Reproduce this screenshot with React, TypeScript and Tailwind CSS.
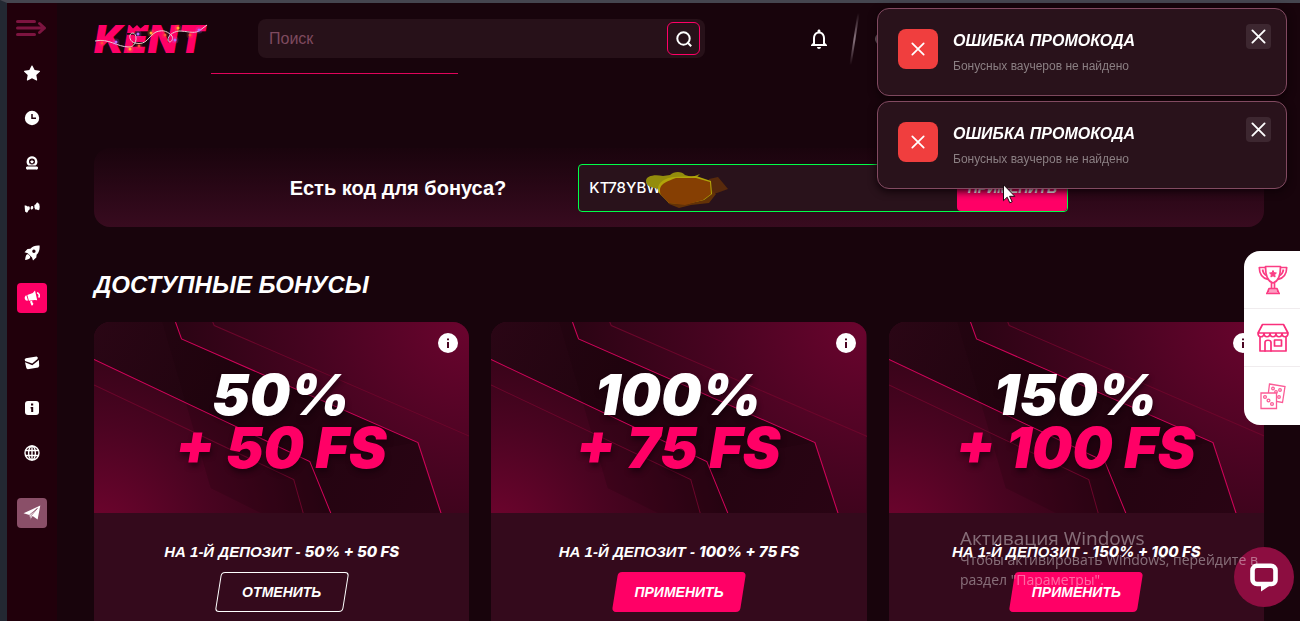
import React from 'react';
import { MdNotificationsNone } from 'react-icons/md';
import { BsStarFill } from 'react-icons/bs';

interface Bonus {
  percent: string;
  spins: string;
  applied: boolean;
}

const bonuses: Bonus[] = [
  { percent: '50%', spins: '50 FS', applied: true },
  { percent: '100%', spins: '75 FS', applied: false },
  { percent: '150%', spins: '100 FS', applied: false },
];

const ClockIcon = () => (
  <svg viewBox="0 0 16 16" className="h-4 w-4">
    <circle cx="8" cy="8" r="7.2" fill="#fff" />
    <path d="M8 4v4.2h4" fill="none" stroke="#21000b" strokeWidth="1.5" />
  </svg>
);

const WheelIcon = () => (
  <svg viewBox="0 0 16 16" className="h-4 w-4" fill="#fff">
    <path
      fillRule="evenodd"
      d="M8 1.2a5.4 5.4 0 0 1 3.6 9.4H4.4A5.4 5.4 0 0 1 8 1.2ZM8 3.6a3 3 0 1 0 0 6A3 3 0 0 0 8 3.6Z"
    />
    <path d="m8 4.600.7 1.300 1.500.2-1.100 1 .3 1.500L8 7.900l-1.400.7.3-1.500-1.100-1 1.500-.2Z" />
    <path d="M3 11.600h10a1.500 1.500 0 0 1-1 3H4a1.500 1.500 0 0 1-1-3Z" />
  </svg>
);

const CandyIcon = () => (
  <svg viewBox="0 0 16 16" className="h-4 w-4" fill="#fff">
    <path d="M.6 5.400 2 5.600l1.600.8 1.500-.1.8 1.500-.3 1.800-1.200.8-.6 1.400-1 1.100-.6-1-.9.2-.4-2.500Z" />
    <path d="m10.400 5 1.400-.8.8-1.400L14 2.600l.4 1 .8.200.5 3-.3 2.800-1.200.6-1.400-.7-1.500.1-.9-2Z" />
    <path d="M7.300 6.300c1-.5 2 .1 2 1.100s-.6 1.900-1.500 2c-1 0-1.300-.7-1.200-1.500.1-.7.3-1.300.7-1.600Z" />
  </svg>
);

const RocketIcon = () => (
  <svg viewBox="0 0 16 16" className="h-4 w-4" fill="#fff">
    <path
      fillRule="evenodd"
      d="M15.600.6c.3 4-.6 6.800-3 9.200l-.3 2.800-3.300 3-1-3.100-4.300-4.300-3.200-.9 3-3.300 2.900-.3C8.700 1.300 11.600.3 15.600.6ZM9.900 4.600a1.700 1.700 0 1 0 0 3.400 1.700 1.700 0 0 0 0-3.400Z"
    />
    <path d="M2.800 9.500c1-.5 2 .2 2.400 1 .9.300 1.400 1.300.9 2.300-.8 1.400-2.800 1.900-5 2.300.2-2.200.5-4.400 1.700-5.600Z" />
  </svg>
);

const MegaphoneIcon = () => (
  <svg viewBox="0 0 16 16" className="h-4 w-4" fill="#fff">
    <path d="M11 .5 13.200 10.300l-2.500-.4-5.800.8L3.300 5 8.800 2.900Z" />
    <path d="M2.400 5.300 4 10.600c-1.500.5-2.700-.2-3.200-1.800-.4-1.500.2-2.900 1.600-3.500Z" />
    <path d="m6 11.400 2-.6.7 2.300.7.300-.6 1.800-1.300.2Z" />
    <path d="M13 2.700c2 .4 3 3 1.600 4.800" fill="none" stroke="#fff" strokeWidth="1.600" />
  </svg>
);

const MailIcon = () => (
  <svg viewBox="0 0 16 16" className="h-4 w-4" fill="#fff">
    <path d="M.8 4.500 1.700 3.300 12.600 1.500l1.200 1-.2 1.600-5.400 4.500L1 5.900Z" />
    <path d="m1 7.300 7.300 3 6.600-5.400.3 6-1 1.500-10.500 1.800-1.300-1Z" />
  </svg>
);

const InfoSquareIcon = () => (
  <svg viewBox="0 0 16 16" className="h-4 w-4">
    <rect x="1" y="1" width="14" height="14" rx="3" fill="#fff" />
    <path d="M7 3.500h2.200v2H7ZM6.600 7h2.600v5H7.200V8.500h-.6Z" fill="#21000b" />
  </svg>
);

const GlobeIcon = () => (
  <svg viewBox="0 0 16 16" className="h-4 w-4" fill="none" stroke="#fff" strokeWidth="1.400">
    <circle cx="8" cy="8" r="7" />
    <ellipse cx="8" cy="8" rx="3.400" ry="7" />
    <path d="M8 1v14M1.500 5.500h13M1.500 10.500h13" />
  </svg>
);

const TelegramIcon = () => (
  <svg viewBox="0 0 18 18" className="h-[18px] w-[18px]" fill="#fff">
    <path d="M.5 9.300 17.300 1.600 14.600 15.400 9.600 12.100 7.400 15.400 6.500 10.900Z" />
    <path d="m6.500 10.900 7.900-6.500-6.300 7.300-.6 3.400" fill="none" stroke="#8a4f68" strokeWidth=".8" />
  </svg>
);

const navItems = [
  { label: 'Избранное', icon: <BsStarFill className="h-4 w-4" /> },
  { label: 'Недавние', icon: <ClockIcon /> },
  { label: 'Колесо', icon: <WheelIcon /> },
  { label: 'Слоты', icon: <CandyIcon /> },
  { label: 'Краш', icon: <RocketIcon /> },
  { label: 'Акции', icon: <MegaphoneIcon />, active: true },
];

const serviceItems = [
  { label: 'Почта', icon: <MailIcon /> },
  { label: 'Информация', icon: <InfoSquareIcon /> },
  { label: 'Язык', icon: <GlobeIcon /> },
];

const NavLink: React.FC<{ label: string; active?: boolean; children: React.ReactNode }> = ({
  label,
  active,
  children,
}) => (
  <a
    href="#"
    aria-label={label}
    className={`flex h-[30px] w-[30px] items-center justify-center rounded text-white ${active ? 'bg-[#ff0066]' : ''}`}
  >
    {children}
  </a>
);

const Sidebar = () => (
  <nav className="flex w-[50px] shrink-0 flex-col items-center bg-[#21000b] pt-4">
    <button type="button" aria-label="Меню">
      <svg width="32" height="20" viewBox="0 0 32 20" fill="none" stroke="#7d1440" strokeWidth="3" strokeLinecap="round" strokeLinejoin="round">
        <path d="M1.500 2.500h17M1.500 9h27M1.500 15.500h17M23.500 4.500l5 4.500-5 4.500" />
      </svg>
    </button>
    <div className="mt-[19px] flex flex-col gap-[15px]">
      {navItems.map((item) => (
        <NavLink key={item.label} label={item.label} active={item.active}>
          {item.icon}
        </NavLink>
      ))}
    </div>
    <div className="mt-[35px] flex flex-col gap-[15px]">
      {serviceItems.map((item) => (
        <NavLink key={item.label} label={item.label}>
          {item.icon}
        </NavLink>
      ))}
    </div>
    <a href="#" aria-label="Telegram" className="mt-[30px] flex h-[30px] w-[30px] items-center justify-center rounded bg-[#8a4f68]">
      <TelegramIcon />
    </a>
  </nav>
);

const bulbs = [
  { x: 8, y: 19, color: '#ff4a3a' },
  { x: 22, y: 18, color: '#b56bff' },
  { x: 36, y: 25, color: '#ffb52e' },
  { x: 44, y: 10, color: '#b56bff' },
  { x: 45, y: 22, color: '#ff4a3a' },
  { x: 57, y: 9, color: '#ffb52e' },
  { x: 71, y: 11, color: '#ff5a3a' },
  { x: 81, y: 16, color: '#b56bff' },
  { x: 84, y: 4, color: '#ffb52e' },
  { x: 96, y: 11, color: '#ff5a3a' },
  { x: 105, y: 6, color: '#b56bff' },
];

const Logo = () => (
  <a href="#" className="relative block w-[114px] font-['Inter',sans-serif] text-[39px] leading-[38px] font-black text-[#ff0066] italic">
    KENT
    <svg viewBox="0 0 116 32" className="absolute top-1 left-0 h-8 w-[116px]">
      {/* crown cut into the letter E */}
      <path d="m35 0 4 4.500L43 1l3.500 3.500L52 0ZM33 9h20v1.800H33Z" fill="#18040c" />
      <path
        d="M1 17c14-3 22 6 34 6 8 0 9-13 4-14-5 0-4 9 2 10 12 3 13-7 21-11 8-3 12 0 16 4 2 5-3 8-4 4 0-4 4-8 11-9 8 0 14 3 20 0l8-6"
        fill="none"
        stroke="#e6cfd6"
        strokeWidth="1"
      />
      {bulbs.map((bulb) => (
        <g key={`${bulb.x}-${bulb.y}`} fill={bulb.color}>
          <circle cx={bulb.x} cy={bulb.y} r="3.500" opacity=".2" />
          <circle cx={bulb.x} cy={bulb.y} r="1.500" />
        </g>
      ))}
    </svg>
  </a>
);

const Header = () => (
  <header>
    <div className="flex h-[39px] items-center">
      <Logo />
      <form className="ml-[50px] flex h-[39px] w-[447px] items-center rounded-lg bg-[#271119] pr-[5px] pl-[11px]">
        <input
          type="search"
          aria-label="Поиск"
          placeholder="Поиск"
          className="min-w-0 flex-1 bg-transparent text-base text-white outline-none placeholder:text-[#7f4a5f]"
        />
        <button type="button" aria-label="Найти" className="flex h-[33px] w-[33px] items-center justify-center rounded-md border border-[#ff0066]">
          <svg width="16" height="16" viewBox="0 0 16 16" fill="none" stroke="#fff" strokeWidth="2">
            <circle cx="7.500" cy="7.500" r="6.200" />
            <path d="m11.300 11.300 3.900 3.900" />
          </svg>
        </button>
      </form>
      <button type="button" aria-label="Уведомления" className="ml-[102px] text-white">
        <MdNotificationsNone className="h-6 w-6" />
      </button>
      <svg width="12" height="54" viewBox="0 0 12 54" className="ml-[18px]">
        <defs>
          <linearGradient id="slash" x1="0" y1="0" x2="0" y2="1">
            <stop offset="0" stopColor="#8a7580" stopOpacity="0" />
            <stop offset=".5" stopColor="#8a7580" />
            <stop offset="1" stopColor="#8a7580" stopOpacity="0" />
          </linearGradient>
        </defs>
        <path d="M8.500 1h2L2.500 53h-2Z" fill="url(#slash)" />
      </svg>
      <span className="ml-[14px] h-3 w-3 rounded-full bg-[#806f77]" />
    </div>
    <div className="mt-[15px] ml-[117px] h-px w-[247px] bg-[#e0045b]" />
  </header>
);

const PromoForm = () => (
  <section className="mt-[74px] flex items-center justify-center gap-[72px] rounded-2xl bg-linear-to-b from-[#1a040d] to-[#380b1f] pt-4 pb-[15px]">
    <label htmlFor="promo" className="text-xl font-bold text-white">
      Есть код для бонуса?
    </label>
    <form className="relative flex h-12 w-[490px] rounded border border-[#00ff48] bg-[#29121b]">
      <input
        id="promo"
        type="text"
        defaultValue="KT78YBW"
        className="min-w-0 flex-1 bg-transparent px-[10px] font-['Inter',sans-serif] text-[15px] font-medium text-white outline-none"
      />
      <button type="button" className="w-[110px] rounded bg-[#ff0066] text-sm font-bold text-white italic">
        ПРИМЕНИТЬ
      </button>
      <svg viewBox="0 0 84 38" className="absolute top-[7px] left-[66px] h-[38px] w-[84px]">
        <path d="M1 9c0-5 8-7 17-5l7-1c4-4 12-4 15 0l7 2 8-3-5 5-15 6-20 4C6 16 1 14 1 9Z" fill="#938c0c" />
        <path d="M64 7 73 5 83 17 72 21 60 23Z" fill="#582a0c" />
        <path d="m18 22 6 10 10 4 12-3 18-2 7-9-6-6Z" fill="#633207" />
        <path d="M13 17c0-7 7-11 16-12l22-1 15 5 1 13-8 6-18 4-17-1-9-9c-1-1-2-3-2-5Z" fill="#b1a409" />
        <path d="M15 17c1-6 8-8 16-11h20l14 4 1 12-8 6-18 5-16-2-8-8c-1-1-1-3-1-6Z" fill="#863f03" />
      </svg>
    </form>
  </section>
);

// stripes and corner glow behind the bonus amount
const CardArt: React.FC<{ id: string }> = ({ id }) => (
  <svg viewBox="0 0 373 191" preserveAspectRatio="none" className="absolute inset-0 h-full w-full" fill="none">
    <defs>
      <radialGradient id={`${id}-left`} gradientUnits="userSpaceOnUse" cx="0" cy="215" r="230">
        <stop offset="0" stopColor="#72042f" />
        <stop offset=".5" stopColor="#4a0421" />
        <stop offset="1" stopColor="#2a0413" />
      </radialGradient>
      <radialGradient id={`${id}-right`} gradientUnits="userSpaceOnUse" cx="373" cy="0" r="300">
        <stop offset="0" stopColor="#6b042e" />
        <stop offset=".5" stopColor="#480421" />
        <stop offset="1" stopColor="#290413" />
      </radialGradient>
      <linearGradient id={`${id}-band`} gradientUnits="userSpaceOnUse" x1="0" y1="0" x2="373" y2="191">
        <stop offset="0" stopColor="#2a0615" />
        <stop offset=".35" stopColor="#21040f" />
        <stop offset="1" stopColor="#2a0414" />
      </linearGradient>
    </defs>
    <path d="M0 0h373v191H0Z" fill={`url(#${id}-band)`} />
    <path d="m80 0 6 17 235 103 23 71h29V0Z" fill={`url(#${id}-right)`} />
    <path d="m0 37 214 102 21 52H0Z" fill={`url(#${id}-left)`} />
    <path d="m68 0 48 166 50 25h70l-21-52L321 120 86 17 80 0Z" fill="#180109" opacity=".2" />
    <path d="m81 0 6 17 235 103.500 23 71M0 37.500l214.500 102 21 52" stroke="#d1045a" />
    <path d="m118 0 1.500 3.500 254.500 111M0 63l198.500 94.500 9.500 34" stroke="#6a062b" />
  </svg>
);

const SkewButton: React.FC<{ outlined: boolean; children: React.ReactNode }> = ({ outlined, children }) => (
  <button type="button" className="relative h-10 w-32 text-sm font-bold text-white italic">
    <span
      className={`absolute inset-0 -skew-x-[9deg] rounded ${outlined ? 'border border-white' : 'bg-[#ff0066]'}`}
    />
    <span className="relative">{children}</span>
  </button>
);

const BonusCard: React.FC<{ bonus: Bonus; id: string }> = ({ bonus, id }) => (
  <article className="flex flex-col items-center rounded-t-2xl bg-[#340a1c] pb-12">
    <div className="relative h-[191px] w-full overflow-hidden rounded-t-2xl">
      <CardArt id={id} />
      <div className="relative flex flex-col items-center pt-[46px] pr-[2px] font-['Inter',sans-serif] text-[57px] leading-[53px] font-black text-white italic [text-shadow:1px_4px_5px_#12010a99]">
        <span>{bonus.percent}</span>
        <span className="text-[#ff0066]">+ {bonus.spins}</span>
      </div>
      <button type="button" aria-label="Подробнее" className="absolute top-[11px] right-[11px]">
        <svg width="20" height="20" viewBox="0 0 20 20">
          <circle cx="10" cy="10" r="10" fill="#fff" />
          <path d="M9 5.500h2v1.800H9ZM9 9h2v6H9Z" fill="#4a0421" />
        </svg>
      </button>
    </div>
    <h3 className="mt-[27px] text-[15px] leading-6 font-bold text-white italic">
      НА 1-Й ДЕПОЗИТ -{' '}
      <span className="font-['Inter',sans-serif] font-extrabold">
        {bonus.percent} + {bonus.spins}
      </span>
    </h3>
    <div className="mt-2">
      <SkewButton outlined={bonus.applied}>{bonus.applied ? 'ОТМЕНИТЬ' : 'ПРИМЕНИТЬ'}</SkewButton>
    </div>
  </article>
);

const Cross: React.FC<{ className: string }> = ({ className }) => (
  <svg viewBox="0 0 16 16" className={className} fill="none" stroke="#fff" strokeWidth="2" strokeLinecap="round">
    <path d="m1.500 1.500 13 13M14.500 1.500l-13 13" />
  </svg>
);

const Toast = () => (
  <div role="alert" className="flex h-[88px] items-start rounded-xl border border-[#824a61] bg-[#29121b] px-5 pt-[15px] shadow-[0_2px_8px_#0c0106]">
    <span className="mt-[5px] flex h-10 w-10 shrink-0 items-center justify-center rounded-lg bg-[#f03e3e]">
      <Cross className="h-[14px] w-[14px]" />
    </span>
    <div className="ml-[15px] flex-1 pt-[5px]">
      <h4 className="text-base leading-6 font-bold text-white italic">ОШИБКА ПРОМОКОДА</h4>
      <p className="text-xs leading-[26px] text-[#8b7f83]">Бонусных ваучеров не найдено</p>
    </div>
    <button type="button" aria-label="Закрыть" className="-mr-[5px] flex h-[25px] w-[25px] items-center justify-center rounded bg-[#3d2730]">
      <Cross className="h-[15px] w-[15px]" />
    </button>
  </div>
);

const TrophyIcon = () => (
  <svg width="30" height="30" viewBox="0 0 30 30" fill="none" stroke="#fb3d84" strokeWidth="1.700" strokeLinejoin="round">
    <path d="M7.500 1.500h15c0 9-2 15-7.500 16.500C9.500 16.500 7.500 10.500 7.500 1.500Z" />
    <path d="M7.500 2.500H1.300c0 6 3 10.500 8.700 12M22.500 2.500h6.200c0 6-3 10.500-8.700 12M4.500 4.500c.5 3 2 5 4 6M25.500 4.500c-.5 3-2 5-4 6M13.500 18v5.500M16.500 18v5.500M11 23.500h8l2 5H9ZM8 28.500h14" />
    <path d="M10.500 25h9v2h-9Z" strokeWidth="1" />
    <path d="m15 5.500 1 2.200 2.400.3-1.700 1.600.4 2.400-2.100-1.200-2.100 1.200.4-2.400L11.600 8l2.400-.3Z" fill="#fb3d84" strokeWidth="1" />
  </svg>
);

const ShopIcon = () => (
  <svg width="32" height="30" viewBox="0 0 32 30" fill="none" stroke="#f92f7b" strokeWidth="1.700" strokeLinejoin="round" strokeLinecap="round">
    <path d="M5.500 1.500h21l4.500 8.500H1ZM1 10c0 5 6 5 6 0 0 5 6 5 6 0 0 5 6 5 6 0 0 5 6 5 6 0 0 5 6 5 6 0M3 14v14h26V14" />
    <path d="M8 28V19.500c0-3 6-3 6 0V28M17.500 17h7v6h-7Z" />
  </svg>
);

const dicePips = [
  [5, 15],
  [8.5, 18.5],
  [12, 22],
];

const DiceIcon = () => (
  <svg width="26" height="28" viewBox="0 0 26 28" fill="#fff" stroke="#fb5c97" strokeWidth="1.300">
    <g>
      <path d="m9.500 2 15.500 2.500-2.500 16-15-2.500Z" />
      <circle cx="13" cy="6.500" r="1.300" />
      <circle cx="20" cy="8" r="1.300" />
      <circle cx="19" cy="15" r="1.300" />
      <circle cx="16" cy="10" r="1.300" />
    </g>
    <path d="M1 11h15.500v15.500H1Z" />
    {dicePips.map(([x, y]) => (
      <circle key={x} cx={x} cy={y} r="1.400" />
    ))}
  </svg>
);

const sideWidgets = [
  { label: 'Турниры', icon: <TrophyIcon /> },
  { label: 'Магазин', icon: <ShopIcon /> },
  { label: 'Игры', icon: <DiceIcon /> },
];

const Overlays = () => (
  <>
    <div className="fixed top-2 right-[13px] flex w-[410px] flex-col gap-[5px]">
      <Toast />
      <Toast />
    </div>
    <aside className="fixed top-[251px] right-0 w-14 divide-y divide-[#f0ecee] overflow-hidden rounded-l-2xl bg-white">
      {sideWidgets.map((widget) => (
        <button key={widget.label} type="button" aria-label={widget.label} className="flex h-[58px] w-full items-center justify-center pl-[2px]">
          {widget.icon}
        </button>
      ))}
    </aside>
    <button type="button" aria-label="Чат" className="fixed right-[6px] bottom-[14px] flex h-[60px] w-[60px] items-center justify-center rounded-full bg-[#8c0d40]">
      <svg width="30" height="30" viewBox="0 0 30 30" fill="none" stroke="#fff" strokeWidth="4.600" strokeLinejoin="round">
        <path d="M8 3.800h14a4.500 4.500 0 0 1 4.500 4.500v9.500A4 4 0 0 1 22.500 22H8a4.500 4.500 0 0 1-4.500-4.500V8.300A4.500 4.500 0 0 1 8 3.800Z" />
        <path d="M12 21v8.500l9-6V21Z" fill="#fff" stroke="none" />
      </svg>
    </button>
    <div className="pointer-events-none fixed right-[30px] bottom-[31px] w-[310px] font-['Open_Sans','Noto_Sans',sans-serif] text-[#ffffff68]">
      <p className="text-[19px] leading-6">Активация Windows</p>
      <p className="text-sm leading-5">Чтобы активировать Windows, перейдите в раздел "Параметры".</p>
    </div>
    <svg width="14" height="20" viewBox="0 0 14 20" className="pointer-events-none fixed top-[184px] left-[1003px]">
      <path d="M.5.700v16l3.700-3.500 2.600 5.600 2.400-1.100-2.600-5.400h5.200Z" fill="#fff" stroke="#1a0a10" />
    </svg>
  </>
);

export default function App() {
  return (
    <div className="flex h-screen overflow-hidden border-t-3 border-l-7 border-t-[#45454f] border-l-[#232832] bg-[#18040c] font-['Liberation_Sans',Arial,sans-serif]">
      <Sidebar />
      <main className="min-w-0 flex-1 pt-4 pr-9 pl-[37px]">
        <Header />
        <PromoForm />
        <h2 className="mt-[42px] text-2xl leading-8 font-bold text-white italic">ДОСТУПНЫЕ БОНУСЫ</h2>
        <div className="mt-[21px] grid grid-cols-3 gap-[22px]">
          {bonuses.map((bonus, i) => (
            <BonusCard key={bonus.percent} bonus={bonus} id={`art-${i}`} />
          ))}
        </div>
      </main>
      <Overlays />
    </div>
  );
}
